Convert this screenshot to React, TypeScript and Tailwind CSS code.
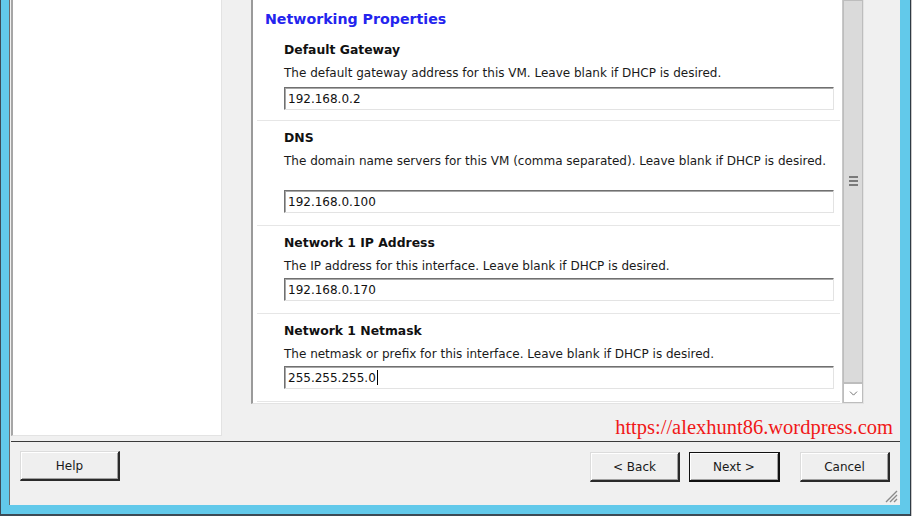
import { ChevronDown } from "lucide-react";

const sans = { fontFamily: '"DejaVu Sans", Tahoma, sans-serif' };

type Field = { title: string; desc: string; value: string; tall?: boolean; caret?: boolean };

const fields: Field[] = [
  { title: "Default Gateway", desc: "The default gateway address for this VM. Leave blank if DHCP is desired.", value: "192.168.0.2" },
  { title: "DNS", desc: "The domain name servers for this VM (comma separated). Leave blank if DHCP is desired.", value: "192.168.0.100", tall: true },
  { title: "Network 1 IP Address", desc: "The IP address for this interface. Leave blank if DHCP is desired.", value: "192.168.0.170" },
  { title: "Network 1 Netmask", desc: "The netmask or prefix for this interface. Leave blank if DHCP is desired.", value: "255.255.255.0", caret: true },
];

function FieldBlock({ f, first }: { f: Field; first?: boolean }) {
  return (
    <div className={`ml-[4px] mr-[2px] pl-[27px] pr-[6px] pt-[7px] ${first ? "pb-[10px]" : "pb-[12px] border-t border-[#e6e6e6]"}`}>
      <div className="h-[20px] leading-[20px] text-[12.4px] font-bold text-[#111]">{f.title}</div>
      <div className={`mt-[3px] text-[12px] leading-[20px] text-[#1a1a1a] whitespace-nowrap ${f.tall ? "h-[37px]" : "h-[20px]"}`}>{f.desc}</div>
      <div className={`${first ? "mt-[4px]" : "mt-[2px]"} h-[23px] w-[550px] flex items-center bg-white border border-t-[#707070] border-l-[#707070] border-r-[#e3e3e3] border-b-[#e3e3e3] shadow-[inset_1px_1px_0_#a8a8a8] pl-[3px] text-[12px] text-[#111]`}>
        {f.value}
        {f.caret && <span className="ml-px inline-block w-px h-[15px] bg-black" />}
      </div>
    </div>
  );
}

function Btn({ label, primary, className }: { label: string; primary?: boolean; className?: string }) {
  return (
    <div
      className={`h-[30px] flex items-center justify-center bg-[#efefef] text-[12px] text-[#1a1a1a] border ${
        primary
          ? "border-[#111] border-r-2 border-b-2 shadow-[inset_1px_1px_0_#fff,inset_-1px_-1px_0_#a0a0a0]"
          : "border-t-[#dcdcdc] border-l-[#dcdcdc] border-r-2 border-b-2 border-r-[#2a2a2a] border-b-[#2a2a2a] shadow-[inset_1px_1px_0_#fff,inset_-1px_-1px_0_#a0a0a0]"
      } ${className ?? ""}`}
    >
      {label}
    </div>
  );
}

export default function App() {
  return (
    <div className="w-[912px] h-[516px] flex overflow-hidden" style={sans}>
      <div className="w-[910px] h-[516px] bg-[#62c9ea] border-l border-b-2 border-[#3d4a55] pl-[8px] pr-[9px]">
        <div className="relative w-[891px] h-[505px] bg-[#f0f0f0] border-l border-[#6a6a6a] flex flex-col">
          <div className="flex h-[436px] shrink-0">
            {/* left step list */}
            <div className="ml-px w-[211px] h-[436px] bg-white border-l-2 border-[#a6a6a6] border-r border-b border-r-[#e3e3e3] border-b-[#e3e3e3]" />
            {/* properties panel */}
            <div className="ml-[29px] w-[613px] h-[404px] flex bg-white border-l-2 border-[#9a9a9a] border-b border-r border-b-[#e3e3e3] border-r-[#e3e3e3]">
              <div className="w-[590px] overflow-hidden">
                <div className="pl-[12px] pt-[9px] h-[33px] leading-[20px] text-[14.2px] font-bold text-[#2424ee]">
                  Networking Properties
                </div>
                {fields.map((f, i) => (
                  <FieldBlock key={f.title} f={f} first={i === 0} />
                ))}
                <div className="ml-[4px] mr-[2px] border-t border-[#e6e6e6]" />
              </div>
              {/* scrollbar */}
              <div className="w-[21px] h-[403px] flex flex-col border-l border-[#c8c8c8] bg-[#f0f0f0]">
                <div className="flex-1 bg-[#dadada] border border-[#bdbdbd] flex items-center justify-center">
                  <div className="flex flex-col gap-[2px] -mt-[22px]">
                    <div className="w-[9px] h-[2px] bg-[#7a7a7a]" />
                    <div className="w-[9px] h-[2px] bg-[#7a7a7a]" />
                    <div className="w-[9px] h-[2px] bg-[#7a7a7a]" />
                  </div>
                </div>
                <div className="h-[20px] bg-white border border-[#bdbdbd] flex items-center justify-center">
                  <ChevronDown size={13} strokeWidth={1.6} color="#606060" />
                </div>
              </div>
            </div>
          </div>

          <div
            className="absolute right-[7px] top-[416px] leading-[22px] text-[20.5px] text-[#f01818]"
            style={{ fontFamily: '"Liberation Serif", "Times New Roman", serif' }}
          >
            https://alexhunt86.wordpress.com
          </div>

          <div className="mt-[5px] ml-px h-px bg-[#3a3a3a]" />

          <div className="flex mt-[9px]">
            <Btn label="Help" className="ml-[10px] w-[100px]" />
            <Btn label="< Back" className="ml-[470px] w-[90px] mt-px" />
            <Btn label="Next >" primary className="ml-[9px] w-[91px] mt-px" />
            <Btn label="Cancel" className="ml-[20px] w-[90px] mt-px" />
          </div>

          <svg className="absolute right-[2px] bottom-[2px]" width="15" height="15" viewBox="0 0 15 15">
            <path d="M14 3 L3 14 M14 7 L7 14 M14 11 L11 14" stroke="#8a8a8a" strokeWidth="1.4" />
          </svg>
        </div>
      </div>
      <div className="w-px h-[516px] bg-[#2f3a44]" />
      <div className="w-px h-[516px] bg-[#c8c8c8]" />
    </div>
  );
}
